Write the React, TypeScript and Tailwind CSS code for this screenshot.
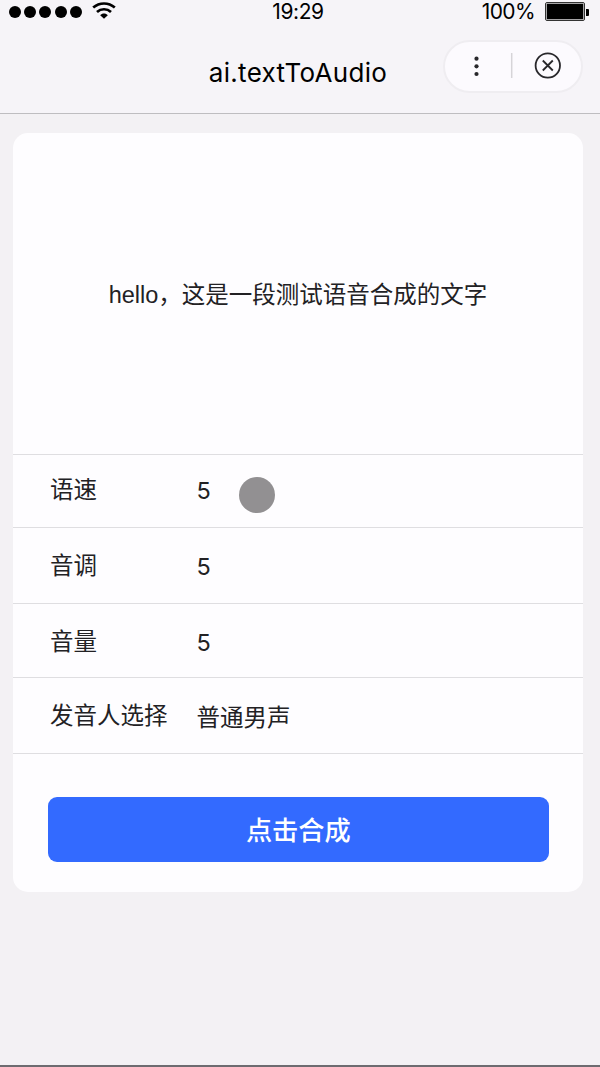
import React from 'react';

interface SettingRowProps {
  label: string;
  value: string;
  className: string;
  pressed?: boolean;
}

const SIGNAL_DOTS = [0, 1, 2, 3, 4];

const WifiIcon: React.FC = () => (
  <svg width="24" height="18" viewBox="0 0 24 18" fill="none" stroke="#000" strokeWidth="2.7">
    <path d="M1.2 6.6C7.4 1.1 16.6 1.1 22.8 6.6" />
    <path d="M5 11C9 7.3 15 7.3 19 11" />
    <path d="M8.2 14.2C10.2 12 13.8 12 15.8 14.2L12 17.8Z" fill="#000" stroke="none" />
  </svg>
);

const StatusBar: React.FC = () => (
  <div className="grid h-6 grid-cols-3 items-center text-[21px] leading-6 text-black">
    <div className="flex items-center pl-[9px]">
      <div className="flex gap-[3.2px]">
        {SIGNAL_DOTS.map((dot) => (
          <span key={dot} className="size-3 rounded-full bg-black" />
        ))}
      </div>
      <div className="ml-[10px] pb-[4px]">
        <WifiIcon />
      </div>
    </div>
    <div className="pr-1 text-center tracking-[-0.4px]">19:29</div>
    <div className="flex items-center justify-end pr-[11px]">
      <span className="mr-[10px] tracking-[-0.6px]">100%</span>
      <span className="mb-px h-[19px] w-10 rounded-[2px] border border-[#333] bg-black">
        <span className="block h-full w-full border border-[#a5a4a6] bg-black" />
      </span>
      <span className="ml-px h-[7px] w-[3px] rounded-r-[1px] bg-black" />
    </div>
  </div>
);

const Capsule: React.FC = () => (
  <div className="flex h-[53px] w-[140px] items-center rounded-full border-2 border-[#efedf1] bg-[#fcfafe]">
    <svg width="136" height="49" viewBox="0 0 136 49" fill="none" stroke="#28272b">
      <g fill="#28272b" stroke="none">
        <circle cx="31.5" cy="16.7" r="2.1" />
        <circle cx="31.5" cy="24.3" r="2.1" />
        <circle cx="31.5" cy="32" r="2.1" />
      </g>
      <path d="M66.7 11V36" stroke="#d6d4d8" strokeWidth="1.5" />
      <circle cx="102.8" cy="23.5" r="12.2" strokeWidth="1.8" />
      <path d="M97.8 18.5L107.8 28.5M107.8 18.5L97.8 28.5" strokeWidth="1.8" />
    </svg>
  </div>
);

const SettingRow: React.FC<SettingRowProps> = ({ label, value, className, pressed = false }) => (
  <div className={`flex items-center border-b border-[#dfdee1] pl-[37px] ${className}`}>
    <span className="w-[146.5px] pb-[3px]">{label}</span>
    <span>{value}</span>
    {pressed && <span className="ml-7 mt-[7px] size-9 rounded-full bg-[#929092]" />}
  </div>
);

const App: React.FC = () => {
  return (
    <div className="flex h-[1067px] w-[600px] flex-col overflow-hidden bg-[#f3f1f4] font-['Inter','Noto_Sans_CJK_SC',sans-serif] text-[#222124]">
      <header className="h-[114px] border-b border-[#bebdc0] bg-[#f6f4f8]">
        <StatusBar />
        <div className="grid grid-cols-[1fr_auto_1fr] items-center pt-4 pr-[17px]">
          <span />
          <h1 className="pt-3 pl-[13px] text-[26px] leading-8 tracking-[0.3px] text-black">ai.textToAudio</h1>
          <div className="flex justify-end">
            <Capsule />
          </div>
        </div>
      </header>

      <main className="mx-[13px] mt-[19px] h-[759px] w-[570px] rounded-[15px] bg-[#fefdff] text-[23.5px] leading-8">
        <div className="flex h-[322px] items-center justify-center border-b border-[#dfdee1] pt-0.5 font-['Liberation_Sans','Noto_Sans_CJK_SC',sans-serif]">
          hello，这是一段测试语音合成的文字
        </div>
        <SettingRow label="语速" value="5" className="h-[73px]" pressed />
        <SettingRow label="音调" value="5" className="h-[76px] pt-[3px]" />
        <SettingRow label="音量" value="5" className="h-[74px] pt-[5px]" />
        <SettingRow label="发音人选择" value="普通男声" className="h-[76px] pt-1" />
        <div className="pt-[43px] pl-[34.5px]">
          <button className="h-[65px] w-[501.5px] rounded-[9px] bg-[#336aff] pt-[3px] text-[26.2px] font-medium text-white">
            点击合成
          </button>
        </div>
      </main>

      <div className="mt-auto h-0.5 bg-[#6d6b70]" />
    </div>
  );
};

export default App;
